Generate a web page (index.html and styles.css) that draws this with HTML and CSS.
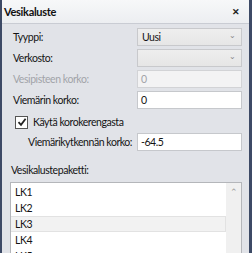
FILE: index.html
```html
<!DOCTYPE html>
<html lang="fi">
<head>
  <meta charset="UTF-8" />
  <title>Vesikaluste</title>
  <link rel="stylesheet" href="styles.css">
</head>
<body>
  <div class="window">
    <div class="titlebar">
      <span class="title">Vesikaluste</span>
      <span class="close">&#x2715;</span>
    </div>
    <div class="content">
      <div class="row">
        <label>Tyyppi:</label>
        <div class="select">Uusi<span class="arrow">&#x2304;</span></div>
      </div>
      <div class="row">
        <label>Verkosto:</label>
        <div class="select"><span class="arrow">&#x2304;</span></div>
      </div>
      <div class="row disabled">
        <label>Vesipisteen korko:</label>
        <div class="input">0</div>
      </div>
      <div class="row">
        <label>Viemärin korko:</label>
        <div class="input">0</div>
      </div>
      <div class="check-row">
        <span class="checkbox">
          <svg width="10" height="10" viewBox="0 0 10 10"><path d="M1.5 5.2 L4 7.8 L8.6 1.8" fill="none" stroke="#222" stroke-width="1.8"/></svg>
        </span>
        <span>Käytä korokerengasta</span>
      </div>
      <div class="row sub">
        <label>Viemärikytkennän korko:</label>
        <div class="input">-64.5</div>
      </div>
      <div class="list-label">Vesikalustepaketti:</div>
      <div class="list">
        <div class="items">
          <div class="item">LK1</div>
          <div class="item">LK2</div>
          <div class="item selected">LK3</div>
          <div class="item">LK4</div>
          <div class="item">LK5</div>
        </div>
        <div class="scrollbar"><span class="up">&#x2303;</span></div>
      </div>
    </div>
  </div>
</body>
</html>
```

FILE: styles.css
```css
body { margin: 0; font-family: Lato, sans-serif; font-size: 10.5px; letter-spacing: -0.45px; color: #141414; }
.window {
  width: 247px;
  height: 253px;
  border-left: 2px solid #3d4a66;
  border-right: 3px solid #3d4a66;
  background: #e1e3e8;
  overflow: hidden;
  white-space: nowrap;
}
.titlebar {
  height: 23px;
  border-bottom: 1px solid #c9ccd3;
  background: linear-gradient(#f7f8f9, #eceef1);
  display: flex;
  align-items: center;
  justify-content: space-between;
  padding: 0 9px 0 2px;
}
.title { font-weight: bold; font-size: 11px; letter-spacing: -0.3px; color: #111; }
.close { font-size: 9px; font-weight: bold; color: #222; }
.content { padding: 4px 7px 0 8px; }
.row {
  display: grid;
  grid-template-columns: 127px 1fr;
  align-items: center;
  height: 18px;
  margin-bottom: 3px;
}
.row label { padding-left: 3px; }
.row.sub label { padding-left: 18px; }
.row.sub { margin-top: 1px; }
.select {
  height: 16px;
  border: 1px solid #c8c9cc;
  background: linear-gradient(#eeeeee, #e6e6e6);
  display: flex;
  align-items: center;
  padding: 0 5px 0 4px;
}
.arrow { margin-left: auto; font-size: 8px; color: #888; line-height: 1; margin-top: -4px; }
.input {
  height: 16px;
  border: 1px solid #c6c8cc;
  background: #fff;
  display: flex;
  align-items: center;
  padding: 0 3px;
}
.disabled label { color: #a2a4a8; }
.disabled .input { background: #f3f3f4; color: #a2a4a8; border-color: #d2d3d6; }
.check-row {
  display: flex;
  align-items: center;
  gap: 5px;
  height: 20px;
  padding-left: 5px;
}
.checkbox {
  width: 11px;
  height: 11px;
  border: 1px solid #555;
  background: #fff;
  display: flex;
  align-items: center;
  justify-content: center;
}
.list-label { margin-top: 13px; height: 18px; padding-left: 1px; }
.list {
  display: flex;
  border: 1px solid #b4b6ba;
  background: #fff;
  height: 80px;
}
.items { flex: 1; padding-top: 1px; }
.item { height: 16px; line-height: 16px; padding-left: 4px; }
.item.selected { background: #f2f2f2; border: 1px solid #e2e2e2; border-left: none; height: 14px; line-height: 14px; }
.scrollbar {
  width: 15px;
  background: #f0f0f0;
  display: flex;
  justify-content: center;
}
.up { font-size: 9px; color: #999; margin-top: 3px; }
```
